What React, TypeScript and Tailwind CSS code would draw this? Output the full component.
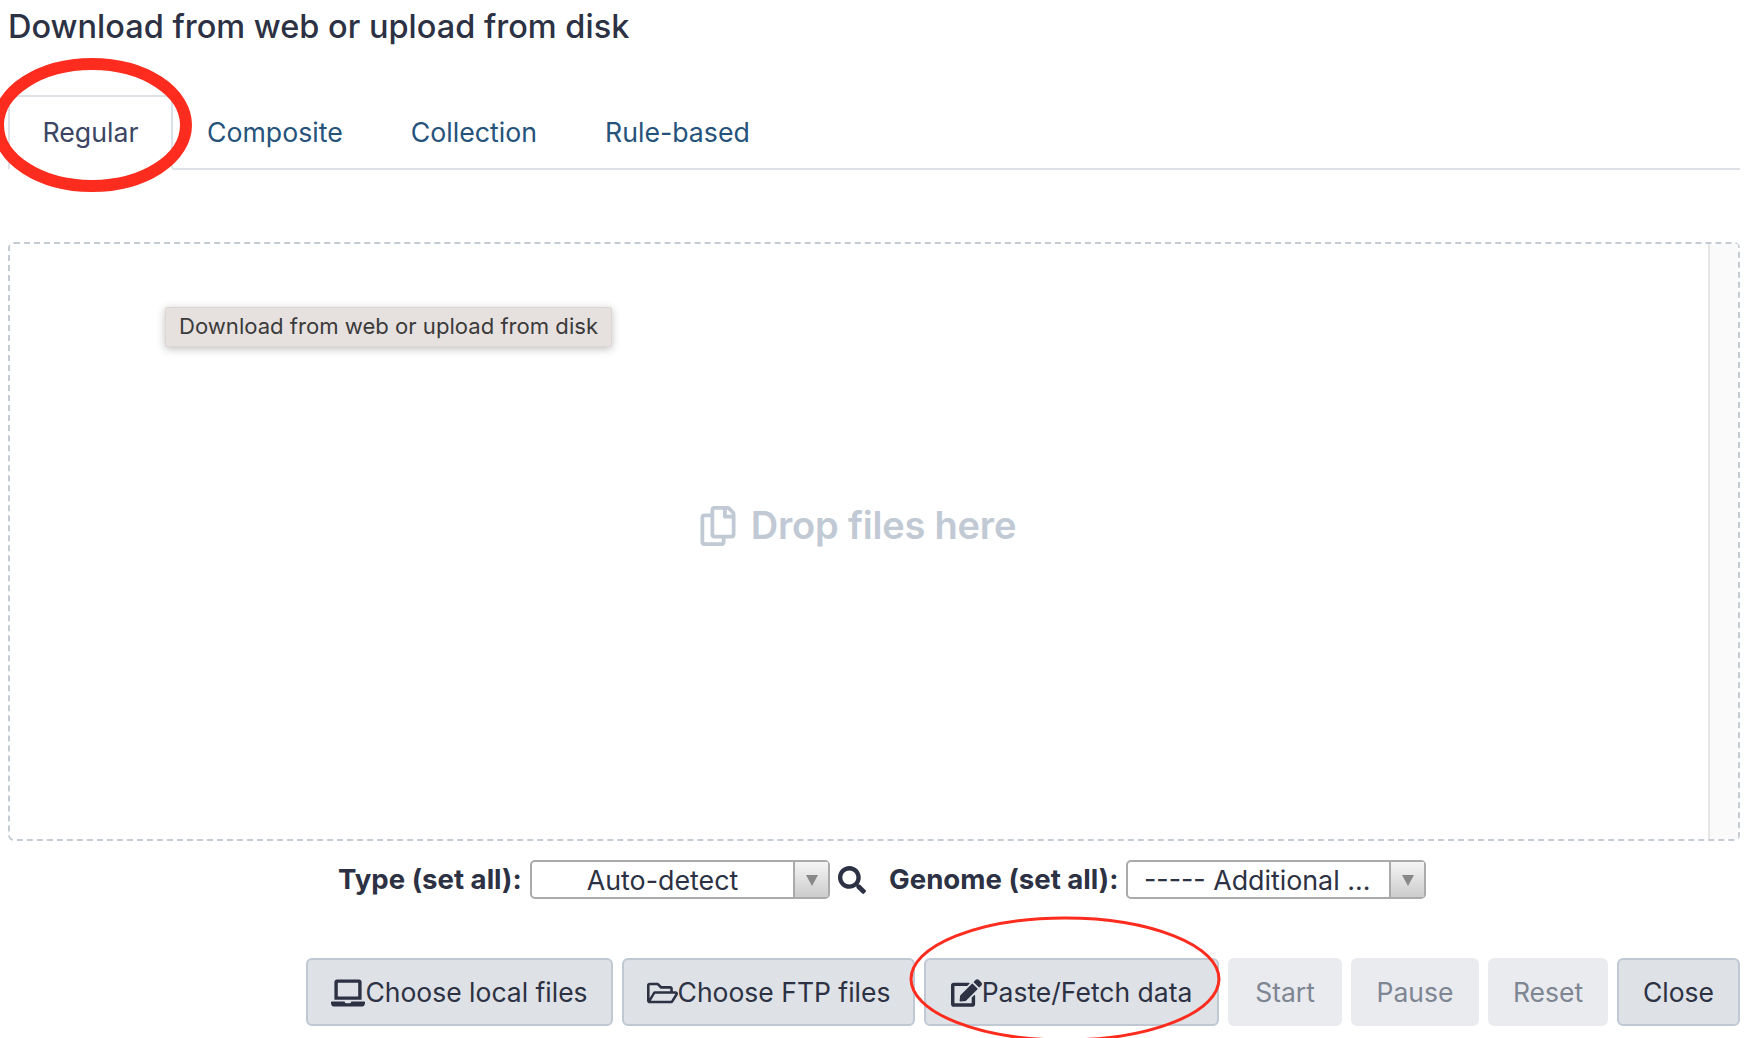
import type { ReactNode } from 'react';
import { FaEdit, FaLaptop, FaRegCopy, FaRegFolderOpen, FaSearch } from 'react-icons/fa';

function Tab({ label, active }: { label: string; active?: boolean }) {
  if (active) {
    return (
      <div className="-mb-[2px] flex h-[75px] w-[165px] items-center justify-center border-2 border-[#dee2e6] border-b-white bg-white text-[#3c4563]">
        {label}
      </div>
    );
  }
  return <div className="flex h-[73px] items-center px-[34px] pt-[2px] text-[#25537b]">{label}</div>;
}

function Select({ value, width, center }: { value: string; width: string; center?: boolean }) {
  return (
    <div className={`flex h-[39px] ${width} shrink-0 rounded-[5px] border-2 border-[#aaaaaa] bg-white font-normal text-[#2c3143]`}>
      <div className={`flex min-w-0 flex-1 items-center pt-[1px] text-[26.8px] ${center ? 'justify-center' : 'pl-[16px]'}`}>
        {value}
      </div>
      <div className="flex w-[35px] items-center justify-center border-l-2 border-[#aaaaaa] bg-gradient-to-b from-[#f5f5f5] to-[#cccccc]">
        <div className="mt-[2px] h-0 w-0 border-x-[6px] border-t-[11px] border-x-transparent border-t-[#888888]" />
      </div>
    </div>
  );
}

function ActionButton({ children, width, disabled }: { children: ReactNode; width: string; disabled?: boolean }) {
  return (
    <div
      className={`flex h-[68px] ${width} shrink-0 items-center justify-center rounded-[6px] border-2 pt-[2px] text-[26.5px] ${
        disabled
          ? 'border-[#eaebef] bg-[#eaebef] text-[#7e8593]'
          : 'border-[#bfc8d3] bg-[#dee1e6] text-[#2c3143]'
      }`}
    >
      {children}
    </div>
  );
}

export default function App() {
  return (
    <div className="relative h-[1038px] w-[1750px] overflow-hidden bg-white font-['Inter',sans-serif]">
      <div className="pl-[8px] pr-[10px]">
        <h2 className="h-[52px] whitespace-nowrap pt-[1px] text-[32.5px] font-medium leading-[52px] text-[#2c3143]">
          Download from web or upload from disk
        </h2>
        <div className="mt-[43px] flex border-b-2 border-[#dee2e6] text-[26.7px]">
          <Tab label="Regular" active />
          <Tab label="Composite" />
          <Tab label="Collection" />
          <Tab label="Rule-based" />
        </div>

        <div className="relative mt-[72px] flex h-[599px] items-center justify-center rounded-[6px] border-2 border-dashed border-[#c5cbd3]">
          <div className="absolute right-0 top-0 h-full w-[30px] border-l-2 border-[#e6e6e6] bg-[#fafafa]" />
          <div className="absolute left-[155px] top-[63px] flex h-[40px] w-[447px] items-center justify-center rounded-[2px] border border-[#dcd7d5] bg-[#e6e1df] text-[22.1px] text-[#3a3a3a] shadow-[0_2px_8px_rgba(0,0,0,0.25)]">
            Download from web or upload from disk
          </div>
          <div className="mr-[32px] mt-[-32px] flex items-center gap-[15px] text-[38px] font-semibold tracking-[-0.2px] text-[#c0c9d4]">
            <FaRegCopy className="h-[40px] w-[36px]" />
            Drop files here
          </div>
        </div>

        <div className="ml-[330px] mt-[19px] flex h-[39px] items-center text-[27.6px] font-bold text-[#2c3143]">
          <span className="mr-[8px] w-[184px] whitespace-nowrap">Type (set all):</span>
          <Select value="Auto-detect" width="w-[300px]" center />
          <FaSearch className="ml-[8px] h-[28px] w-[28px]" />
          <span className="ml-[23px] mr-[8px] w-[229px] whitespace-nowrap">Genome (set all):</span>
          <Select value="----- Additional ..." width="w-[300px]" />
        </div>

        <div className="ml-[298px] mt-[59px] flex gap-[9px]">
          <ActionButton width="w-[307px]">
            <FaLaptop className="h-[30px] w-[34px]" />
            Choose local files
          </ActionButton>
          <ActionButton width="w-[293px]">
            <FaRegFolderOpen className="h-[28px] w-[31px]" />
            Choose FTP files
          </ActionButton>
          <ActionButton width="w-[295px]">
            <FaEdit className="h-[28px] w-[31px]" />
            Paste/Fetch data
          </ActionButton>
          <ActionButton width="w-[114px]" disabled>Start</ActionButton>
          <ActionButton width="w-[128px]" disabled>Pause</ActionButton>
          <ActionButton width="w-[120px]" disabled>Reset</ActionButton>
          <ActionButton width="w-[123px]">Close</ActionButton>
        </div>
      </div>

      {/* annotation circles drawn over the screenshot */}
      <svg className="absolute left-0 top-0 h-[1038px] w-[1750px]" viewBox="0 0 1750 1038" fill="none">
        <ellipse cx="92" cy="125" rx="94" ry="61" stroke="#fd2c1e" strokeWidth="12" />
        <ellipse cx="1065" cy="979" rx="154" ry="61" stroke="#fd2c1e" strokeWidth="3" />
      </svg>
    </div>
  );
}
